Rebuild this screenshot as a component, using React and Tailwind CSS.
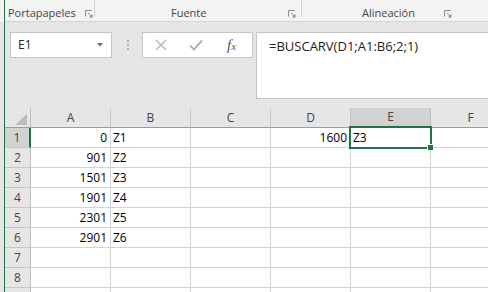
import React from "react";

const cols = ["A", "B", "C", "D", "E", "F"];
const numeric = { A: true, D: true };

const data = {
    1: { A: "0", B: "Z1", D: "1600", E: "Z3" },
    2: { A: "901", B: "Z2" },
    3: { A: "1501", B: "Z3" },
    4: { A: "1901", B: "Z4" },
    5: { A: "2301", B: "Z5" },
    6: { A: "2901", B: "Z6" },
    7: {},
    8: {},
};

function Launcher() {
    return (
        <svg width="8" height="8" viewBox="0 0 8 8" className="shrink-0">
            <path d="M0.5 6.5 V0.5 H6.5" fill="none" stroke="#8a8a8a" strokeWidth="1" />
            <path d="M3 3 L6.5 6.5" stroke="#8a8a8a" strokeWidth="1" />
            <path d="M7.5 4 V7.5 H4 Z" fill="#8a8a8a" />
        </svg>
    );
}

function Ribbon() {
    return (
        <div className="flex shrink-0 h-[22px] bg-[#f3f3f3] border-b border-[#d5d5d5] text-[11px] leading-[15px] text-[#444]">
            <div className="flex w-[90px] shrink-0 pl-[3px] pt-[5px]">
                <span>Portapapeles</span>
                <div className="ml-[9px] mt-[5px]"><Launcher /></div>
                <div className="ml-auto -mt-[5px] w-px h-[17px] bg-[#d5d5d5]" />
            </div>
            <div className="flex w-[207px] shrink-0 pt-[5px]">
                <span className="ml-[76px]">Fuente</span>
                <div className="ml-[82px] mt-[5px]"><Launcher /></div>
                <div className="ml-auto -mt-[5px] w-px h-[17px] bg-[#d5d5d5]" />
            </div>
            <div className="flex pt-[5px]">
                <span className="ml-[60px]">Alineación</span>
                <div className="ml-[29px] mt-[5px]"><Launcher /></div>
            </div>
        </div>
    );
}

function FormulaBand() {
    return (
        <div className="flex shrink-0 h-[86px] pt-[10px] bg-[#e6e6e6]">
            <div className="ml-[5px] flex items-center w-[102px] h-[26px] bg-white border border-[#c6c6c6] pl-[7px] pr-[8px] text-[12px] text-[#222]">
                <span>E1</span>
                <svg width="6" height="4" viewBox="0 0 6 4" className="ml-auto">
                    <path d="M0 0 H6 L3 3.5 Z" fill="#6a6a6a" />
                </svg>
            </div>
            <div className="ml-[14px] w-[3px] h-[26px] flex flex-col items-center justify-center gap-[2px]">
                <div className="w-[2px] h-[2px] bg-[#b0b0b0]" />
                <div className="w-[2px] h-[2px] bg-[#b0b0b0]" />
                <div className="w-[2px] h-[2px] bg-[#b0b0b0]" />
            </div>
            <div className="ml-[13px] flex items-center w-[111px] h-[26px] bg-white border border-[#c6c6c6]">
                <svg width="12" height="12" viewBox="0 0 12 12" className="ml-[12px]">
                    <path d="M1 1 L11 11 M11 1 L1 11" stroke="#b4b4b4" strokeWidth="1.3" />
                </svg>
                <svg width="14" height="12" viewBox="0 0 14 12" className="ml-[22px]">
                    <path d="M1 6.5 L5 10.5 L13 1.5" fill="none" stroke="#b4b4b4" strokeWidth="2" />
                </svg>
                <span className="ml-[24px] font-['Liberation_Serif',serif] italic text-[15px] leading-none text-[#555]">
                    f<span className="text-[11px]">x</span>
                </span>
            </div>
            <div className="ml-[3px] flex-1 h-[67px] bg-white border border-[#c6c6c6] border-r-0 pl-[12px] pt-[4px] text-[13px] text-[#222]">
                =BUSCARV(D1;A1:B6;2;1)
            </div>
        </div>
    );
}

function Grid() {
    return (
        <div className="relative shrink-0 grid grid-cols-[26px_80px_80px_80px_80px_80px_80px] auto-rows-[20px] text-[12px]">
            <div className="bg-[#e6e6e6] border-r border-b border-[#bfbfbf] border-b-[#9b9b9b] flex items-end justify-end pr-[3px] pb-[2px]">
                <svg width="12" height="11" viewBox="0 0 12 11">
                    <path d="M12 0 V11 H0 Z" fill="#bcbcbc" />
                </svg>
            </div>
            {cols.map(c => (
                <div
                    key={c}
                    className={
                        c === "E"
                            ? "bg-[#d2d2d2] border-r border-[#bfbfbf] border-b-2 border-b-[#217346] flex items-center justify-center text-[#444]"
                            : "bg-[#e6e6e6] border-r border-[#c6c6c6] border-b border-b-[#9b9b9b] flex items-center justify-center text-[#444]"
                    }
                >
                    {c}
                </div>
            ))}
            {Object.keys(data).map(r => (
                <React.Fragment key={r}>
                    <div
                        className={
                            r === "1"
                                ? "bg-[#d2d2d2] border-r-2 border-r-[#217346] border-b border-b-[#c6c6c6] flex items-center justify-center text-[#444]"
                                : "bg-[#e6e6e6] border-r border-r-[#bfbfbf] border-b border-b-[#c6c6c6] flex items-center justify-center text-[#444]"
                        }
                    >
                        {r}
                    </div>
                    {cols.map(c => (
                        <div
                            key={c}
                            className={
                                numeric[c]
                                    ? "bg-white border-r border-b border-[#d4d4d4] flex items-center justify-end pr-[3px] text-black"
                                    : "bg-white border-r border-b border-[#d4d4d4] flex items-center pl-[2px] text-black"
                            }
                        >
                            {data[r][c]}
                        </div>
                    ))}
                </React.Fragment>
            ))}
            <div className="bg-[#e6e6e6] border-r border-r-[#bfbfbf]" />
            {cols.map(c => (
                <div key={c} className="bg-white border-r border-[#d4d4d4]" />
            ))}
            <div className="absolute left-[344px] top-[18px] w-[83px] h-[23px] border-2 border-[#217346]" />
            <div className="absolute left-[422px] top-[36px] w-[6px] h-[6px] bg-[#217346] border-t border-l border-white" />
        </div>
    );
}

export default function App() {
    return (
        <div className="flex w-[488px] h-[292px] overflow-hidden bg-[#e6e6e6] font-['Open_Sans','Noto_Sans',sans-serif]">
            <div className="w-[4px] shrink-0 flex flex-col">
                <div className="h-[22px] bg-[#f3f3f3]" />
                <div className="flex-1 bg-[#e6e6e6]" />
            </div>
            <div className="w-px shrink-0 bg-[#217346]" />
            <div className="flex-1 min-w-0 flex flex-col">
                <Ribbon />
                <FormulaBand />
                <Grid />
            </div>
        </div>
    );
}
